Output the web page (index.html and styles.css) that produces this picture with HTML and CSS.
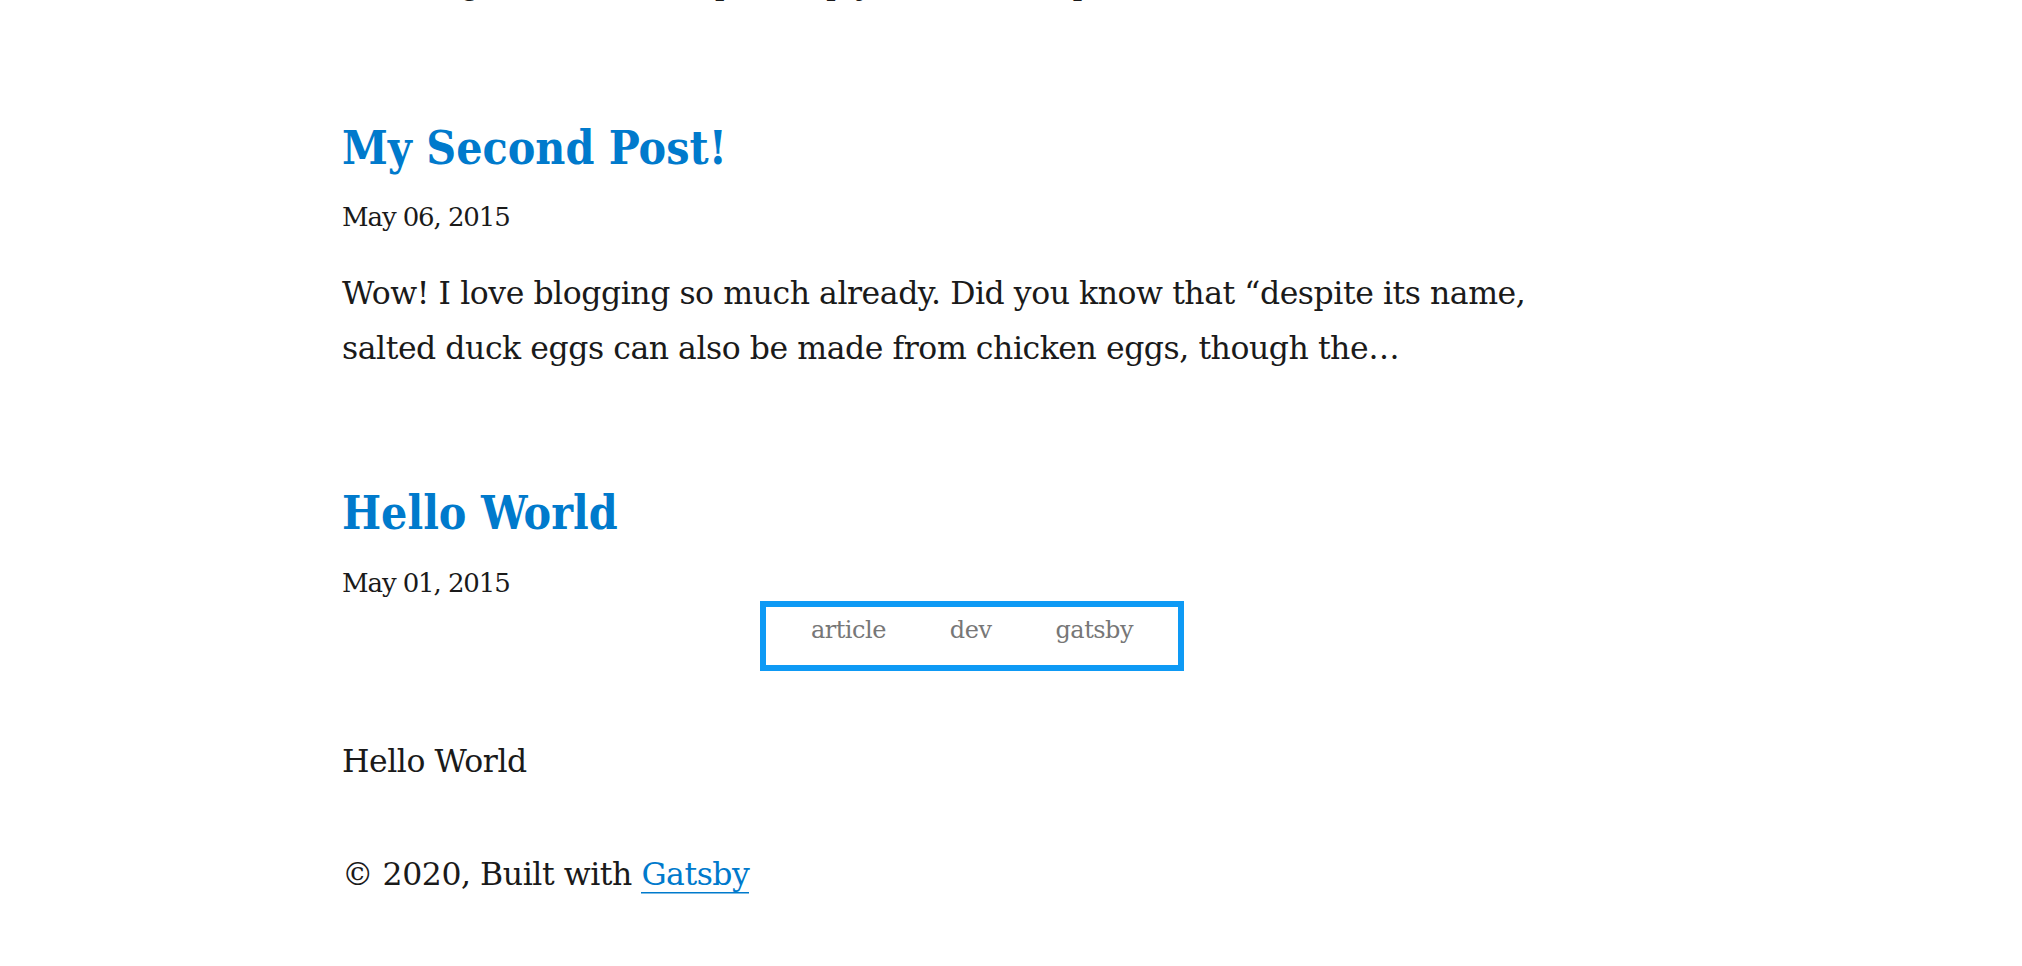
FILE: index.html
```html
<!DOCTYPE html>
<html lang="en">
<head>
  <meta charset="UTF-8" />
  <title>Gatsby Starter Blog</title>
  <link rel="stylesheet" href="styles.css">
</head>
<body>
<div class="layout">
  <main>
    <article class="post">
      <header>
        <h3 class="post-title"><a href="/new-beginnings/">New Beginnings</a></h3>
        <small class="post-date">May 28, 2015</small>
      </header>
      <section>
        <p class="excerpt">This is a custom description for SEO and Open Graph purposes, rather than the default generated excerpt. Simply add a description field to the frontmatter.</p>
      </section>
    </article>

    <article class="post">
      <header>
        <h3 class="post-title"><a href="/my-second-post/">My Second Post!</a></h3>
        <small class="post-date">May 06, 2015</small>
      </header>
      <section>
        <p class="excerpt">Wow! I love blogging so much already. Did you know that “despite its name, salted duck eggs can also be made from chicken eggs, though the…</p>
      </section>
    </article>

    <article class="post">
      <header>
        <h3 class="post-title"><a href="/hello-world/">Hello World</a></h3>
        <small class="post-date">May 01, 2015</small>
        <ul class="tags">
          <li>article</li>
          <li>dev</li>
          <li>gatsby</li>
        </ul>
      </header>
      <section>
        <p class="excerpt">Hello World</p>
      </section>
    </article>
  </main>

  <footer class="footer">
    © 2020, Built with <a href="https://www.gatsbyjs.org">Gatsby</a>
  </footer>
</div>
</body>
</html>
```

FILE: styles.css
```css
body {
  margin: 0;
  background: #fff;
  font-family: "DejaVu Serif", "Liberation Serif", serif;
  font-size: 31.5px;
  line-height: 55px;
  letter-spacing: -0.45px;
  color: #1a1a1a;
}
.layout {
  display: flow-root;
  width: 1260px;
  margin: -354.8px 0 0 342px;
}
.post-title {
  margin: 112px 0 26px;
  font-size: 46px;
  line-height: 50.6px;
  font-weight: 700;
  font-stretch: condensed;
  letter-spacing: 0;
}
.post-title a {
  color: #007acc;
  text-decoration: none;
}
.post-date {
  display: block;
  font-size: 26px;
  line-height: 36px;
  letter-spacing: -1.1px;
}
.excerpt {
  margin: 31px 0 0;
}
.tags {
  display: flex;
  gap: 64px;
  width: fit-content;
  margin: 0 auto 63px;
  padding: 2px 45px 14px;
  list-style: none;
  border: 6px solid #0e9af5;
  font-size: 24px;
  line-height: 42px;
  letter-spacing: -0.5px;
  color: #777;
}
.footer {
  margin-top: 58px;
}
.footer a {
  color: #007acc;
  text-decoration: none;
  box-shadow: 0 1.5px 0 0 currentColor;
}
```
